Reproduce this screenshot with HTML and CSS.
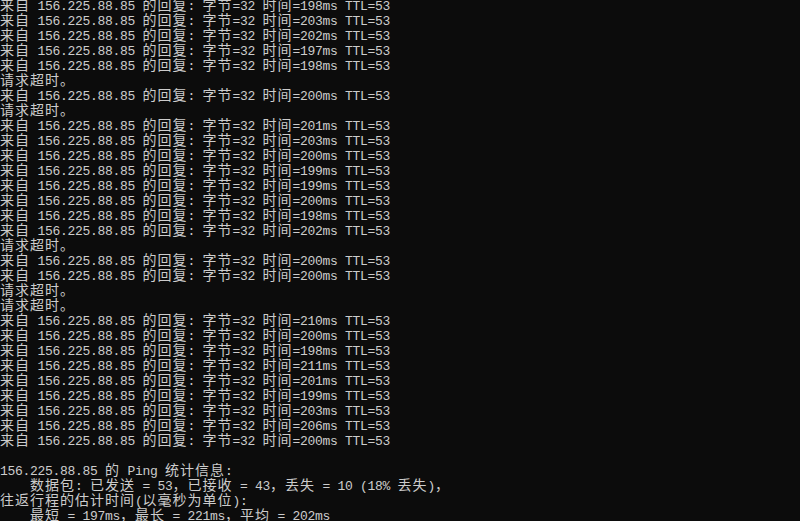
FILE: index.html
```html
<!DOCTYPE html>
<html lang="zh-CN">
<head>
<meta charset="utf-8">
<title>ping</title>
<link rel="stylesheet" href="styles.css">
</head>
<body>
<div class="console">
<div class="ln"><span class="c">来自</span> 156.225.88.85 <span class="c">的回复</span>: <span class="c">字节</span>=32 <span class="c">时间</span>=198ms TTL=53</div>
<div class="ln"><span class="c">来自</span> 156.225.88.85 <span class="c">的回复</span>: <span class="c">字节</span>=32 <span class="c">时间</span>=203ms TTL=53</div>
<div class="ln"><span class="c">来自</span> 156.225.88.85 <span class="c">的回复</span>: <span class="c">字节</span>=32 <span class="c">时间</span>=202ms TTL=53</div>
<div class="ln"><span class="c">来自</span> 156.225.88.85 <span class="c">的回复</span>: <span class="c">字节</span>=32 <span class="c">时间</span>=197ms TTL=53</div>
<div class="ln"><span class="c">来自</span> 156.225.88.85 <span class="c">的回复</span>: <span class="c">字节</span>=32 <span class="c">时间</span>=198ms TTL=53</div>
<div class="ln"><span class="c">请求超时。</span></div>
<div class="ln"><span class="c">来自</span> 156.225.88.85 <span class="c">的回复</span>: <span class="c">字节</span>=32 <span class="c">时间</span>=200ms TTL=53</div>
<div class="ln"><span class="c">请求超时。</span></div>
<div class="ln"><span class="c">来自</span> 156.225.88.85 <span class="c">的回复</span>: <span class="c">字节</span>=32 <span class="c">时间</span>=201ms TTL=53</div>
<div class="ln"><span class="c">来自</span> 156.225.88.85 <span class="c">的回复</span>: <span class="c">字节</span>=32 <span class="c">时间</span>=203ms TTL=53</div>
<div class="ln"><span class="c">来自</span> 156.225.88.85 <span class="c">的回复</span>: <span class="c">字节</span>=32 <span class="c">时间</span>=200ms TTL=53</div>
<div class="ln"><span class="c">来自</span> 156.225.88.85 <span class="c">的回复</span>: <span class="c">字节</span>=32 <span class="c">时间</span>=199ms TTL=53</div>
<div class="ln"><span class="c">来自</span> 156.225.88.85 <span class="c">的回复</span>: <span class="c">字节</span>=32 <span class="c">时间</span>=199ms TTL=53</div>
<div class="ln"><span class="c">来自</span> 156.225.88.85 <span class="c">的回复</span>: <span class="c">字节</span>=32 <span class="c">时间</span>=200ms TTL=53</div>
<div class="ln"><span class="c">来自</span> 156.225.88.85 <span class="c">的回复</span>: <span class="c">字节</span>=32 <span class="c">时间</span>=198ms TTL=53</div>
<div class="ln"><span class="c">来自</span> 156.225.88.85 <span class="c">的回复</span>: <span class="c">字节</span>=32 <span class="c">时间</span>=202ms TTL=53</div>
<div class="ln"><span class="c">请求超时。</span></div>
<div class="ln"><span class="c">来自</span> 156.225.88.85 <span class="c">的回复</span>: <span class="c">字节</span>=32 <span class="c">时间</span>=200ms TTL=53</div>
<div class="ln"><span class="c">来自</span> 156.225.88.85 <span class="c">的回复</span>: <span class="c">字节</span>=32 <span class="c">时间</span>=200ms TTL=53</div>
<div class="ln"><span class="c">请求超时。</span></div>
<div class="ln"><span class="c">请求超时。</span></div>
<div class="ln"><span class="c">来自</span> 156.225.88.85 <span class="c">的回复</span>: <span class="c">字节</span>=32 <span class="c">时间</span>=210ms TTL=53</div>
<div class="ln"><span class="c">来自</span> 156.225.88.85 <span class="c">的回复</span>: <span class="c">字节</span>=32 <span class="c">时间</span>=200ms TTL=53</div>
<div class="ln"><span class="c">来自</span> 156.225.88.85 <span class="c">的回复</span>: <span class="c">字节</span>=32 <span class="c">时间</span>=198ms TTL=53</div>
<div class="ln"><span class="c">来自</span> 156.225.88.85 <span class="c">的回复</span>: <span class="c">字节</span>=32 <span class="c">时间</span>=211ms TTL=53</div>
<div class="ln"><span class="c">来自</span> 156.225.88.85 <span class="c">的回复</span>: <span class="c">字节</span>=32 <span class="c">时间</span>=201ms TTL=53</div>
<div class="ln"><span class="c">来自</span> 156.225.88.85 <span class="c">的回复</span>: <span class="c">字节</span>=32 <span class="c">时间</span>=199ms TTL=53</div>
<div class="ln"><span class="c">来自</span> 156.225.88.85 <span class="c">的回复</span>: <span class="c">字节</span>=32 <span class="c">时间</span>=203ms TTL=53</div>
<div class="ln"><span class="c">来自</span> 156.225.88.85 <span class="c">的回复</span>: <span class="c">字节</span>=32 <span class="c">时间</span>=206ms TTL=53</div>
<div class="ln"><span class="c">来自</span> 156.225.88.85 <span class="c">的回复</span>: <span class="c">字节</span>=32 <span class="c">时间</span>=200ms TTL=53</div>
<div class="ln"> </div>
<div class="ln">156.225.88.85 <span class="c">的</span> Ping <span class="c">统计信息</span>:</div>
<div class="ln">    <span class="c">数据包</span>: <span class="c">已发送</span> = 53<span class="c">，已接收</span> = 43<span class="c">，丢失</span> = 10 (18% <span class="c">丢失</span>)<span class="c">，</span></div>
<div class="ln"><span class="c">往返行程的估计时间</span>(<span class="c">以毫秒为单位</span>):</div>
<div class="ln">    <span class="c">最短</span> = 197ms<span class="c">，最长</span> = 221ms<span class="c">，平均</span> = 202ms</div>
</div>
</body>
</html>
```
FILE: styles.css
```css
html, body {
  margin: 0;
  padding: 0;
  background: #0c0c0c;
  overflow: hidden;
  height: 521px;
}
.console {
  margin-top: -3px;
  color: #cccccc;
  font-family: "Liberation Mono", "DejaVu Sans Mono", monospace;
  font-size: 13px;
  letter-spacing: -0.3px;
  line-height: 15px;
}
.ln {
  height: 15px;
  white-space: pre;
  overflow: visible;
}
.c {
  font-family: "Noto Sans CJK SC", sans-serif;
  font-size: 14px;
  letter-spacing: 1px;
  line-height: 15px;
}
```
